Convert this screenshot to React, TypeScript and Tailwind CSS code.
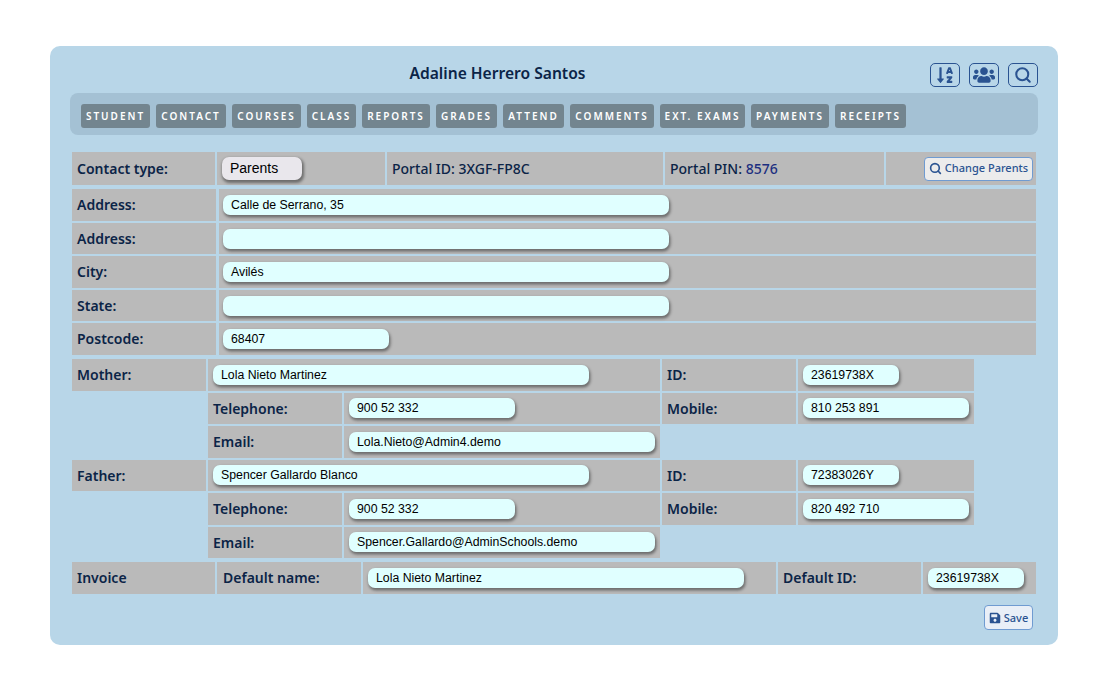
import { Search } from 'lucide-react'
import { FaSave, FaSortAlphaDown, FaUsers } from 'react-icons/fa'

const tabs = [
  { label: 'STUDENT', width: 'w-[69px]' },
  { label: 'CONTACT', width: 'w-[70px]' },
  { label: 'COURSES', width: 'w-[69px]' },
  { label: 'CLASS', width: 'w-[49px]' },
  { label: 'REPORTS', width: 'w-[68px]' },
  { label: 'GRADES', width: 'w-[61px]' },
  { label: 'ATTEND', width: 'w-[61px]' },
  { label: 'COMMENTS', width: 'w-[84px]' },
  { label: 'EXT. EXAMS', width: 'w-[85px]' },
  { label: 'PAYMENTS', width: 'w-[78px]' },
  { label: 'RECEIPTS', width: 'w-[71px]' },
]

function Input({ value = '', width }: { value?: string; width: string }) {
  return (
    <div className={`${width} h-[20px] rounded-[7px] bg-[#e0ffff] pl-[8px] font-['Liberation_Sans',sans-serif] text-[12.3px] leading-[20px] font-normal text-black shadow-[1px_2px_3px_0.5px_rgba(0,0,0,0.42)]`}>
      {value}
    </div>
  )
}

function Cell({ className = '', children }: { className?: string; children?: React.ReactNode }) {
  return <div className={`flex h-full items-center bg-[#bababa] ${className}`}>{children}</div>
}

function Label({ className = '', children }: { className?: string; children: React.ReactNode }) {
  return <Cell className={`pl-[5px] text-[14px] font-semibold text-[#0b2447] ${className}`}>{children}</Cell>
}

function AddressRow({ label, value, width, height }: { label: string; value?: string; width: string; height: string }) {
  return (
    <div className={`flex gap-[3px] ${height}`}>
      <Label className="w-[144px] pb-[1px]">{label}</Label>
      <Cell className="flex-1 pl-[4px]">
        <Input value={value} width={width} />
      </Cell>
    </div>
  )
}

function Person({ label, name, id, tel, mobile, email }: { label: string; name: string; id: string; tel: string; mobile: string; email: string }) {
  return (
    <>
      <div className="flex h-[31.5px] gap-[2px]">
        <Label className="w-[134px]">{label}</Label>
        <Cell className="w-[452px] pl-[5px]">
          <Input value={name} width="w-[376px]" />
        </Cell>
        <Label className="w-[134px]">ID:</Label>
        <Cell className="w-[176px] pl-[5px]">
          <Input value={id} width="w-[96px]" />
        </Cell>
      </div>
      <div className="flex h-[31.5px] gap-[2px] pl-[136px]">
        <Label className="w-[134px]">Telephone:</Label>
        <Cell className="w-[316px] pl-[5px]">
          <Input value={tel} width="w-[166px]" />
        </Cell>
        <Label className="w-[134px]">Mobile:</Label>
        <Cell className="w-[176px] pl-[5px]">
          <Input value={mobile} width="w-[166px]" />
        </Cell>
      </div>
      <div className="flex h-[31.5px] gap-[2px] pl-[136px]">
        <Label className="w-[134px]">Email:</Label>
        <Cell className="w-[316px] pl-[5px]">
          <Input value={email} width="w-[306px]" />
        </Cell>
      </div>
    </>
  )
}

export default function App() {
  return (
    <div className="h-[700px] w-[1100px] bg-white pt-[46px] pl-[50px] font-['Noto_Sans',sans-serif]">
      <div className="h-[599px] w-[1008px] rounded-[10px] bg-[#b8d6e8] px-[20px]">
        {/* Header */}
        <div className="flex h-[47px] items-start">
          <h1 className="mt-[16px] ml-[339.5px] text-[15.6px] leading-[22px] font-semibold text-[#0b2447]">Adaline Herrero Santos</h1>
          <div className="mt-[17px] ml-auto flex gap-[9px] text-[#2a5391]">
            <button className="flex h-[24px] w-[30px] items-center justify-center rounded-[5px] border border-[#2a5391]">
              <FaSortAlphaDown size={18} />
            </button>
            <button className="flex h-[24px] w-[30px] items-center justify-center rounded-[5px] border border-[#2a5391]">
              <FaUsers size={22} />
            </button>
            <button className="flex h-[24px] w-[30px] items-center justify-center rounded-[5px] border border-[#2a5391]">
              <Search size={18} strokeWidth={2.75} />
            </button>
          </div>
        </div>

        {/* Tabs */}
        <div className="flex h-[42px] items-start gap-[6px] rounded-[8px] bg-[#a4c1d4] pt-[11px] pl-[11px]">
          {tabs.map((t) => (
            <div key={t.label} className={`${t.width} flex h-[24px] items-center justify-center rounded-[3px] bg-[#73858f] text-[10px] font-semibold tracking-[2px] text-white`}>
              {t.label}
            </div>
          ))}
        </div>

        {/* Form */}
        <div className="mt-[17px] flex w-[966px] flex-col gap-[2px] pl-[2px]">
          <div className="mb-[2px] flex h-[33px] gap-[2px]">
            <Label className="w-[143px]">Contact type:</Label>
            <Cell className="w-[168px] pl-[5px]">
              <div className="h-[23px] w-[80px] rounded-[7px] bg-[#e9e7ec] pl-[8px] font-['Liberation_Sans',sans-serif] text-[14px] leading-[22px] text-black shadow-[1px_2px_3px_0.5px_rgba(0,0,0,0.42)]">
                Parents
              </div>
            </Cell>
            <Cell className="w-[276px] pl-[5px] text-[14px] font-medium text-[#0b2447]">Portal ID: 3XGF-FP8C</Cell>
            <Cell className="w-[219px] pl-[5px] text-[14px] font-medium text-[#0b2447]">
              Portal PIN:&nbsp;<span className="text-[#1c2f80]">8576</span>
            </Cell>
            <Cell className="flex-1 justify-end pr-[3px]">
              <button className="flex h-[24px] w-[109px] items-center justify-center gap-[3px] rounded-[4px] border border-[#6f9bd1] bg-[#ececec] text-[11px] font-medium text-[#2a5391]">
                <Search size={13} strokeWidth={3} />
                Change Parents
              </button>
            </Cell>
          </div>
          <AddressRow label="Address:" value="Calle de Serrano, 35" width="w-[446px]" height="h-[32px]" />
          <AddressRow label="Address:" width="w-[446px]" height="h-[31px]" />
          <AddressRow label="City:" value="Avilés" width="w-[446px]" height="h-[32px]" />
          <AddressRow label="State:" width="w-[446px]" height="h-[31px]" />
          <AddressRow label="Postcode:" value="68407" width="w-[166px]" height="h-[32px]" />

          <div className="mt-[2px] flex flex-col gap-[2px]">
            <Person label="Mother:" name="Lola Nieto Martinez" id="23619738X" tel="900 52 332" mobile="810 253 891" email="Lola.Nieto@Admin4.demo" />
            <Person label="Father:" name="Spencer Gallardo Blanco" id="72383026Y" tel="900 52 332" mobile="820 492 710" email="Spencer.Gallardo@AdminSchools.demo" />
          </div>

          <div className="mt-[2px] flex h-[31.5px] gap-[2px]">
            <Label className="w-[143px]">Invoice</Label>
            <Label className="w-[144px] pl-[6px]">Default name:</Label>
            <Cell className="w-[413px] pl-[5px]">
              <Input value="Lola Nieto Martinez" width="w-[376px]" />
            </Cell>
            <Label className="w-[143px]">Default ID:</Label>
            <Cell className="flex-1 pl-[5px]">
              <Input value="23619738X" width="w-[96px]" />
            </Cell>
          </div>
        </div>

        {/* Save */}
        <div className="mt-[11.5px] flex w-[963px] justify-end">
          <button className="flex h-[25px] w-[49px] items-center justify-center gap-[3px] rounded-[4px] border border-[#6f9bd1] bg-[#e9eff7] pt-[1px] text-[11px] font-medium text-[#2a5391]">
            <FaSave size={12} />
            Save
          </button>
        </div>
      </div>
    </div>
  )
}
